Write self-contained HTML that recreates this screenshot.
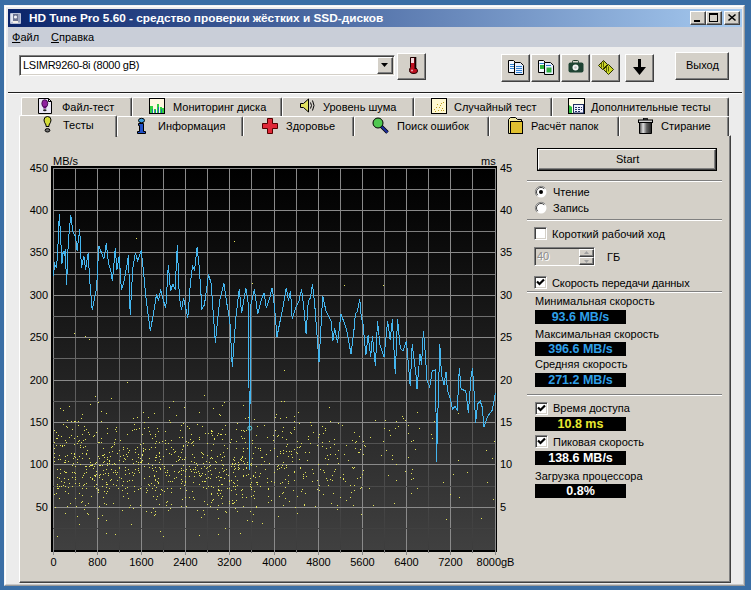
<!DOCTYPE html>
<html><head><meta charset="utf-8">
<style>
*{margin:0;padding:0;box-sizing:border-box}
html,body{width:751px;height:590px;overflow:hidden;background:#3A6EA5;font-family:"Liberation Sans",sans-serif;font-size:11px;color:#000}
.a{position:absolute}
svg.a{overflow:visible}
.t{position:absolute;white-space:nowrap;line-height:13px}
.btn{position:absolute;background:#D4D0C8;border:1px solid;border-color:#fff #404040 #404040 #fff;box-shadow:inset -1px -1px #808080}
.tb{position:absolute;background:#D4D0C8;border-top:1px solid #fff;border-left:1px solid #fff;border-right:1px solid #404040;box-shadow:inset -1px 0 #808080;border-radius:2px 2px 0 0}
.sep{position:absolute;height:2px;border-top:1px solid #808080;border-bottom:1px solid #fff}
.vbox{position:absolute;background:#000;font-weight:bold;font-size:12.5px;text-align:center;line-height:14px}
.cb{position:absolute;width:13px;height:13px;background:#fff;border:1px solid;border-color:#808080 #fff #fff #808080;box-shadow:inset 1px 1px #404040,inset -1px -1px #D4D0C8}
</style></head><body>
<!-- window -->
<div class="a" style="left:4px;top:5px;width:741px;height:581px;background:#ECECEC;border:1px solid;border-color:#F4F4F4 #9A9A9A #9A9A9A #F4F4F4"></div>
<div class="a" style="left:5px;top:6px;width:739px;height:579px;border:1px solid;border-color:#fff #C8C8C8 #C8C8C8 #fff"></div>
<!-- title bar -->
<div class="a" style="left:8px;top:9px;width:734px;height:18px;background:linear-gradient(90deg,#0A246A,#A6CAF0)"></div>
<svg class="a" style="left:10px;top:13px" width="11" height="11"><rect x="0" y="0" width="11" height="11" rx="1" fill="#B8C0D8"/><rect x="1" y="1" width="2" height="8" fill="#E0E4F0"/><rect x="3" y="1" width="5" height="7" fill="#6A7290"/><circle cx="5.5" cy="4" r="1.6" fill="#F0F0F4"/><rect x="3" y="8" width="5" height="2" fill="#F4F0E8"/><rect x="8" y="1" width="2" height="8" fill="#9AA2BC"/></svg>
<div class="t" id="title" style="left:29px;top:11px;color:#fff;font-weight:bold;font-size:11.8px;line-height:14px">HD Tune Pro 5.60 - средство проверки жёстких и SSD-дисков</div>
<!-- window buttons -->
<div class="btn" style="left:690px;top:11px;width:16px;height:14px"></div>
<div class="a" style="left:694px;top:20px;width:6px;height:2px;background:#000"></div>
<div class="btn" style="left:706px;top:11px;width:16px;height:14px"></div>
<div class="a" style="left:709px;top:13px;width:9px;height:9px;border:1px solid #000;border-top-width:2px"></div>
<div class="btn" style="left:724px;top:11px;width:16px;height:14px"></div>
<svg class="a" style="left:728px;top:14px" width="8" height="7"><path d="M0.5 0.5L7.5 6.5M7.5 0.5L0.5 6.5" stroke="#000" stroke-width="1.6"/></svg>
<!-- menu bar -->
<div class="a" style="left:8px;top:27px;width:734px;height:20px;background:#C9CED8"></div>
<div class="t" style="left:12px;top:31px"><u>Ф</u>айл</div>
<div class="t" style="left:51px;top:31px"><u>С</u>правка</div>
<!-- toolbar -->
<div class="a" style="left:8px;top:47px;width:734px;height:45px;background:#EEEEEE"></div>
<div class="a" style="left:8px;top:92px;width:734px;height:1px;background:#202020"></div>
<div class="a" style="left:8px;top:93px;width:734px;height:1px;background:#fff"></div>
<!-- combo -->
<div class="a" style="left:19px;top:55px;width:376px;height:21px;background:#fff;border:1px solid;border-color:#808080 #fff #fff #808080;box-shadow:inset 1px 1px #404040,inset -1px -1px #D4D0C8"></div>
<div class="t" style="left:23px;top:59px;letter-spacing:-0.25px">LSIMR9260-8i (8000 gB)</div>
<div class="btn" style="left:377px;top:57px;width:16px;height:17px"></div>
<svg class="a" style="left:381px;top:63px" width="7" height="4"><path d="M0 0H7L3.5 4z" fill="#000"/></svg>
<!-- thermometer btn -->
<div class="btn" style="left:397px;top:53px;width:29px;height:27px"></div>
<svg class="a" style="left:408px;top:56px" width="11" height="19"><path d="M2.5 1.5H7.5V11.5Q9.5 13 9.5 15Q9.5 17.5 6 17.5Q1.5 17.5 1.5 14.5Q1.5 12.5 2.5 11.5Z" fill="#C01020" stroke="#200000"/><rect x="3" y="2" width="3" height="5" fill="#F4D8DC"/><rect x="6.5" y="1" width="1.8" height="12" fill="#100000"/><circle cx="4" cy="14.5" r="1" fill="#F0B0B8"/></svg>
<!-- toolbar buttons -->
<div class="btn" style="left:501px;top:54px;width:29px;height:28px"></div>
<svg class="a" style="left:508px;top:60px" width="16" height="15"><path d="M0.5 0.5H5.5L7.5 2.5V12.5H0.5z" fill="#F4F8FF" stroke="#000"/><path d="M2 4.5H6M2 6.5H6M2 8.5H6" stroke="#3080D0"/><path d="M6.5 2.5H12.5L15.5 5.5V14.5H6.5z" fill="#E8F0FF" stroke="#000"/><path d="M8 6.5H14M8 8.5H14M8 10.5H14M8 12.5H14" stroke="#3080D0"/></svg>
<div class="btn" style="left:531px;top:54px;width:29px;height:28px"></div>
<svg class="a" style="left:538px;top:60px" width="16" height="15"><path d="M0.5 0.5H5.5L7.5 2.5V12.5H0.5z" fill="#F4F8FF" stroke="#000"/><rect x="2" y="5" width="4" height="4" fill="#30B040"/><path d="M1.5 3.5H6" stroke="#3080D0"/><path d="M6.5 2.5H12.5L15.5 5.5V14.5H6.5z" fill="#E8F0FF" stroke="#000"/><rect x="8.5" y="7.5" width="5" height="5" fill="#30B040"/><path d="M8 5.5H13" stroke="#3080D0"/></svg>
<div class="btn" style="left:561px;top:54px;width:29px;height:28px"></div>
<svg class="a" style="left:568px;top:60px" width="16" height="13"><rect x="4.5" y="0.5" width="6" height="3" rx="1" fill="none" stroke="#1C3A2A"/><rect x="0.5" y="2.5" width="15" height="10" rx="2" fill="#1E4232"/><circle cx="7.5" cy="7.5" r="3" fill="#F4F4F4"/><circle cx="7.5" cy="7.5" r="1.3" fill="#C0C0C0"/></svg>
<div class="btn" style="left:591px;top:54px;width:29px;height:28px"></div>
<svg class="a" style="left:597px;top:59px" width="18" height="17"><g fill="#CCD828" stroke="#2A3000" stroke-width="1"><path d="M1.5 6.5L6.5 1.5L10.5 5.5L5.5 10.5z" stroke-linejoin="round"/><path d="M6.5 10.5L11.5 5.5L16.5 10.5L11.5 15.5z" stroke-linejoin="round"/></g><path d="M4.5 3.5V8.5M6.5 2.5V8.5M9.5 7.5V13.5M11.5 7.5V12.5" stroke="#4A5000" stroke-width="0.9"/></svg>
<div class="btn" style="left:625px;top:54px;width:29px;height:28px"></div>
<svg class="a" style="left:633px;top:59px" width="13" height="16"><path d="M5 0H8V8H13L6.5 16L0 8H5z" fill="#000"/></svg>
<div class="btn" style="left:675px;top:52px;width:54px;height:28px"></div>
<div class="t" style="left:686px;top:59px">Выход</div>

<!-- panel -->
<div class="a" style="left:19px;top:135px;width:712px;height:448px;background:#D4D0C8;border:1px solid;border-color:#fff #404040 #404040 #fff;box-shadow:inset -1px -1px #808080"></div>

<!-- tabs row1 -->
<div class="tb" style="left:21px;top:97px;width:111px;height:19px"></div>
<div class="tb" style="left:132px;top:97px;width:150px;height:19px"></div>
<div class="tb" style="left:282px;top:97px;width:132px;height:19px"></div>
<div class="tb" style="left:414px;top:97px;width:138px;height:19px"></div>
<div class="tb" style="left:552px;top:97px;width:177px;height:19px"></div>
<div class="t" style="left:62px;top:101px">Файл-тест</div>
<div class="t" style="left:173px;top:101px">Мониторинг диска</div>
<div class="t" style="left:323px;top:101px">Уровень шума</div>
<div class="t" style="left:454px;top:101px">Случайный тест</div>
<div class="t" style="left:591px;top:101px">Дополнительные тесты</div>

<svg class="a" style="left:38px;top:98px" width="15" height="16"><path d="M0.5 0.5H10.5L13.5 3.5V15.5H0.5z" fill="#ECE8F8" stroke="#000"/><path d="M10.5 0.5V3.5H13.5" fill="none" stroke="#000"/><ellipse cx="6.8" cy="5.5" rx="3" ry="3.8" fill="#9020A0" stroke="#300038" stroke-width="0.8"/><rect x="5.3" y="8.5" width="3" height="2" fill="#600070"/><ellipse cx="6.8" cy="12.3" rx="1.8" ry="1" fill="#202020"/></svg>
<svg class="a" style="left:149px;top:98px" width="16" height="16"><rect x="0.5" y="0.5" width="15" height="15" fill="#FFF8E0" stroke="#000"/><path d="M1 8H4V15H1zM5 11H7V15H5zM8 6H10V15H8zM11 9H13V15H11zM13 10H15V15H13z" fill="#30D040"/><path d="M3 11H4V15H3zM6 12H7V15H6zM9 9H10V15H9zM12 11H13V15H12z" fill="#2070B0"/></svg>
<svg class="a" style="left:299px;top:98px" width="18" height="15"><path d="M1.5 5.5H4.5L9.5 1V14L4.5 9.5H1.5z" fill="#E0E060" stroke="#000"/><path d="M11.5 4.5Q13.5 7.5 11.5 10.5M13.5 2.5Q16.5 7.5 13.5 12.5" fill="none" stroke="#000"/></svg>
<svg class="a" style="left:431px;top:98px" width="16" height="16"><rect x="0.5" y="0.5" width="15" height="15" fill="#FFF8D0" stroke="#000"/><path d="M3 11h1v1h-1zM5 9h1v1h-1zM7 12h1v1h-1zM9 7h1v1h-1zM11 10h1v1h-1zM12 4h1v1h-1zM6 6h1v1h-1zM10 12h1v1h-1zM4 13h1v1h-1zM8 9h1v1h-1zM12 12h1v1h-1zM10 5h1v1h-1z" fill="#C0A020"/></svg>
<svg class="a" style="left:568px;top:98px" width="17" height="16"><rect x="0.5" y="0.5" width="16" height="15" fill="#FFFCE8" stroke="#000"/><path d="M1 7L4 9V15H1z" fill="#30C040"/><rect x="5.5" y="6.5" width="10" height="8.5" fill="#F0F0FF" stroke="#203060"/><path d="M7 9h2v1h-2zM10 9h2v1h-2zM13 9h1v1h-1zM7 11h2v1h-2zM10 11h2v1h-2zM13 11h1v1h-1zM7 13h2v1h-2zM10 13h2v1h-2z" fill="#203060"/></svg>

<!-- tabs row2 -->
<div class="tb" style="left:117px;top:116px;width:126px;height:20px"></div>
<div class="tb" style="left:243px;top:116px;width:111px;height:20px"></div>
<div class="tb" style="left:354px;top:116px;width:135px;height:20px"></div>
<div class="tb" style="left:489px;top:116px;width:130px;height:20px"></div>
<div class="tb" style="left:619px;top:116px;width:110px;height:20px"></div>
<div class="tb" style="left:19px;top:115px;width:98px;height:22px;border-radius:2px 2px 0 0"></div>
<div class="t" style="left:63px;top:119px">Тесты</div>
<div class="t" style="left:158px;top:120px">Информация</div>
<div class="t" style="left:286px;top:120px">Здоровье</div>
<div class="t" style="left:397px;top:120px">Поиск ошибок</div>
<div class="t" style="left:531px;top:120px">Расчёт папок</div>
<div class="t" style="left:661px;top:120px">Стирание</div>

<svg class="a" style="left:43px;top:116px" width="10" height="17"><path d="M4.5 0.5Q8 0.5 8 4Q8 6 6 9V10.5H3V9Q1 6 1 4Q1 0.5 4.5 0.5z" fill="#D4DC38" stroke="#000"/><ellipse cx="4.5" cy="14.3" rx="2.4" ry="1.7" fill="#707070" stroke="#000"/></svg>
<svg class="a" style="left:137px;top:118px" width="10" height="16"><ellipse cx="4.5" cy="2.5" rx="3" ry="2.2" fill="#40A0E0" stroke="#000"/><path d="M1.5 5.5H6.5V13.5H8.5V15.5H0.5V13.5H2.5V7.5H1.5z" fill="#2050C8" stroke="#000"/></svg>
<svg class="a" style="left:262px;top:118px" width="17" height="16"><path d="M5.5 0.5H10.5V5.5H15.5V10.5H10.5V15.5H5.5V10.5H0.5V5.5H5.5z" fill="#E02838" stroke="#500"/></svg>
<svg class="a" style="left:372px;top:117px" width="18" height="17"><path d="M9 9L15.5 15.5" stroke="#000" stroke-width="3.5"/><path d="M9 9L15.5 15.5" stroke="#2030A0" stroke-width="2"/><circle cx="6" cy="6" r="5" fill="#50C850" stroke="#000"/></svg>
<svg class="a" style="left:508px;top:117px" width="16" height="17"><path d="M0.5 2.5L2.5 0.5H7.5L9.5 2.5H13.5V16.5H0.5z" fill="#F0E8A0" stroke="#000"/><rect x="2.5" y="4.5" width="12" height="12" fill="#E0C030" stroke="#000"/></svg>
<svg class="a" style="left:638px;top:118px" width="15" height="16"><defs><linearGradient id="tr" x1="0" x2="1"><stop offset="0" stop-color="#404040"/><stop offset="0.3" stop-color="#E0E0E0"/><stop offset="0.6" stop-color="#606060"/><stop offset="1" stop-color="#202020"/></linearGradient></defs><rect x="5.5" y="0.5" width="4" height="1.5" fill="#808080" stroke="#000" stroke-width="0.8"/><rect x="0.5" y="2" width="14" height="2.5" fill="#D0D0D0" stroke="#000"/><path d="M1.5 4.5H13.5V15.5H1.5z" fill="url(#tr)" stroke="#000"/></svg>


<svg class="a" style="left:0;top:0" width="751" height="590">
<defs><linearGradient id="bg" x1="0" y1="0" x2="0" y2="1"><stop offset="0" stop-color="#000"/><stop offset="0.12" stop-color="#060606"/><stop offset="1" stop-color="#404040"/></linearGradient>
<linearGradient id="mn" gradientUnits="userSpaceOnUse" x1="0" y1="168" x2="0" y2="550"><stop offset="0" stop-color="#8a8a8a"/><stop offset="0.45" stop-color="#6a6a6a"/><stop offset="1" stop-color="#3c3c3c"/></linearGradient></defs>
<rect x="51" y="166" width="446" height="386" fill="#000"/>
<rect x="53" y="168" width="443" height="382" fill="url(#bg)"/>
<rect x="53" y="168" width="1" height="387" fill="#8a8a8a"/>
<rect x="75" y="168" width="1" height="382" fill="url(#mn)"/>
<rect x="75" y="550" width="1" height="3" fill="#7a7a7a"/>
<rect x="97" y="168" width="1" height="387" fill="#8a8a8a"/>
<rect x="119" y="168" width="1" height="382" fill="url(#mn)"/>
<rect x="119" y="550" width="1" height="3" fill="#7a7a7a"/>
<rect x="141" y="168" width="1" height="387" fill="#8a8a8a"/>
<rect x="163" y="168" width="1" height="382" fill="url(#mn)"/>
<rect x="163" y="550" width="1" height="3" fill="#7a7a7a"/>
<rect x="185" y="168" width="1" height="387" fill="#8a8a8a"/>
<rect x="207" y="168" width="1" height="382" fill="url(#mn)"/>
<rect x="207" y="550" width="1" height="3" fill="#7a7a7a"/>
<rect x="229" y="168" width="1" height="387" fill="#8a8a8a"/>
<rect x="251" y="168" width="1" height="382" fill="url(#mn)"/>
<rect x="251" y="550" width="1" height="3" fill="#7a7a7a"/>
<rect x="274" y="168" width="1" height="387" fill="#8a8a8a"/>
<rect x="296" y="168" width="1" height="382" fill="url(#mn)"/>
<rect x="296" y="550" width="1" height="3" fill="#7a7a7a"/>
<rect x="318" y="168" width="1" height="387" fill="#8a8a8a"/>
<rect x="340" y="168" width="1" height="382" fill="url(#mn)"/>
<rect x="340" y="550" width="1" height="3" fill="#7a7a7a"/>
<rect x="362" y="168" width="1" height="387" fill="#8a8a8a"/>
<rect x="384" y="168" width="1" height="382" fill="url(#mn)"/>
<rect x="384" y="550" width="1" height="3" fill="#7a7a7a"/>
<rect x="406" y="168" width="1" height="387" fill="#8a8a8a"/>
<rect x="428" y="168" width="1" height="382" fill="url(#mn)"/>
<rect x="428" y="550" width="1" height="3" fill="#7a7a7a"/>
<rect x="450" y="168" width="1" height="387" fill="#8a8a8a"/>
<rect x="472" y="168" width="1" height="382" fill="url(#mn)"/>
<rect x="472" y="550" width="1" height="3" fill="#7a7a7a"/>
<rect x="495" y="168" width="1" height="387" fill="#8a8a8a"/>
<rect x="53" y="168" width="442" height="1" fill="#8a8a8a"/>
<rect x="53" y="189" width="442" height="1" fill="url(#mn)"/>
<rect x="53" y="210" width="442" height="1" fill="#8a8a8a"/>
<rect x="53" y="231" width="442" height="1" fill="url(#mn)"/>
<rect x="53" y="252" width="442" height="1" fill="#8a8a8a"/>
<rect x="53" y="274" width="442" height="1" fill="url(#mn)"/>
<rect x="53" y="295" width="442" height="1" fill="#8a8a8a"/>
<rect x="53" y="316" width="442" height="1" fill="url(#mn)"/>
<rect x="53" y="337" width="442" height="1" fill="#8a8a8a"/>
<rect x="53" y="358" width="442" height="1" fill="url(#mn)"/>
<rect x="53" y="380" width="442" height="1" fill="#8a8a8a"/>
<rect x="53" y="401" width="442" height="1" fill="url(#mn)"/>
<rect x="53" y="422" width="442" height="1" fill="#8a8a8a"/>
<rect x="53" y="443" width="442" height="1" fill="url(#mn)"/>
<rect x="53" y="464" width="442" height="1" fill="#8a8a8a"/>
<rect x="53" y="486" width="442" height="1" fill="url(#mn)"/>
<rect x="53" y="507" width="442" height="1" fill="#8a8a8a"/>
<rect x="53" y="528" width="442" height="1" fill="url(#mn)"/>
<path d="M184 459h1v1h-1zM68 479h1v1h-1zM65 440h1v1h-1zM155 460h1v1h-1zM68 493h1v1h-1zM72 472h1v1h-1zM78 421h1v1h-1zM98 489h1v1h-1zM169 420h1v1h-1zM133 418h1v1h-1zM226 474h1v1h-1zM112 464h1v1h-1zM116 474h1v1h-1zM218 476h1v1h-1zM182 481h1v1h-1zM128 498h1v1h-1zM65 456h1v1h-1zM95 463h1v1h-1zM117 453h1v1h-1zM171 440h1v1h-1zM213 444h1v1h-1zM194 472h1v1h-1zM159 467h1v1h-1zM229 501h1v1h-1zM251 463h1v1h-1zM77 443h1v1h-1zM84 426h1v1h-1zM152 488h1v1h-1zM207 504h1v1h-1zM169 475h1v1h-1zM193 482h1v1h-1zM173 449h1v1h-1zM222 439h1v1h-1zM243 451h1v1h-1zM66 426h1v1h-1zM194 472h1v1h-1zM219 414h1v1h-1zM111 398h1v1h-1zM58 435h1v1h-1zM146 492h1v1h-1zM65 472h1v1h-1zM208 477h1v1h-1zM132 480h1v1h-1zM229 480h1v1h-1zM164 491h1v1h-1zM231 480h1v1h-1zM109 488h1v1h-1zM137 417h1v1h-1zM246 430h1v1h-1zM84 509h1v1h-1zM100 474h1v1h-1zM151 483h1v1h-1zM54 448h1v1h-1zM138 454h1v1h-1zM245 442h1v1h-1zM192 491h1v1h-1zM189 428h1v1h-1zM64 462h1v1h-1zM229 503h1v1h-1zM214 438h1v1h-1zM74 444h1v1h-1zM181 483h1v1h-1zM95 475h1v1h-1zM86 469h1v1h-1zM54 461h1v1h-1zM84 473h1v1h-1zM59 486h1v1h-1zM229 481h1v1h-1zM104 454h1v1h-1zM123 455h1v1h-1zM224 456h1v1h-1zM253 476h1v1h-1zM71 435h1v1h-1zM74 472h1v1h-1zM220 454h1v1h-1zM86 483h1v1h-1zM160 531h1v1h-1zM83 475h1v1h-1zM160 459h1v1h-1zM250 464h1v1h-1zM106 493h1v1h-1zM127 434h1v1h-1zM161 489h1v1h-1zM210 506h1v1h-1zM217 456h1v1h-1zM251 482h1v1h-1zM218 495h1v1h-1zM202 426h1v1h-1zM125 470h1v1h-1zM59 498h1v1h-1zM106 487h1v1h-1zM193 469h1v1h-1zM242 494h1v1h-1zM252 458h1v1h-1zM98 490h1v1h-1zM99 458h1v1h-1zM179 471h1v1h-1zM234 483h1v1h-1zM185 482h1v1h-1zM214 439h1v1h-1zM236 500h1v1h-1zM211 486h1v1h-1zM89 466h1v1h-1zM212 435h1v1h-1zM249 441h1v1h-1zM133 508h1v1h-1zM199 412h1v1h-1zM88 503h1v1h-1zM235 476h1v1h-1zM216 477h1v1h-1zM251 496h1v1h-1zM186 506h1v1h-1zM80 445h1v1h-1zM56 493h1v1h-1zM159 504h1v1h-1zM241 458h1v1h-1zM220 415h1v1h-1zM96 488h1v1h-1zM102 465h1v1h-1zM171 488h1v1h-1zM80 464h1v1h-1zM236 494h1v1h-1zM171 447h1v1h-1zM235 489h1v1h-1zM154 413h1v1h-1zM160 494h1v1h-1zM142 460h1v1h-1zM90 465h1v1h-1zM88 514h1v1h-1zM149 467h1v1h-1zM119 460h1v1h-1zM158 431h1v1h-1zM75 421h1v1h-1zM166 449h1v1h-1zM209 466h1v1h-1zM156 487h1v1h-1zM237 423h1v1h-1zM143 448h1v1h-1zM156 441h1v1h-1zM193 445h1v1h-1zM150 434h1v1h-1zM243 475h1v1h-1zM243 448h1v1h-1zM106 413h1v1h-1zM222 405h1v1h-1zM81 442h1v1h-1zM68 487h1v1h-1zM102 486h1v1h-1zM211 502h1v1h-1zM234 483h1v1h-1zM186 490h1v1h-1zM82 501h1v1h-1zM98 518h1v1h-1zM245 418h1v1h-1zM252 440h1v1h-1zM221 484h1v1h-1zM157 481h1v1h-1zM122 490h1v1h-1zM199 473h1v1h-1zM57 488h1v1h-1zM57 438h1v1h-1zM120 456h1v1h-1zM66 442h1v1h-1zM252 443h1v1h-1zM75 483h1v1h-1zM210 465h1v1h-1zM108 473h1v1h-1zM237 485h1v1h-1zM218 486h1v1h-1zM238 465h1v1h-1zM168 481h1v1h-1zM65 462h1v1h-1zM192 454h1v1h-1zM242 456h1v1h-1zM181 470h1v1h-1zM226 469h1v1h-1zM67 455h1v1h-1zM122 485h1v1h-1zM165 443h1v1h-1zM79 485h1v1h-1zM159 456h1v1h-1zM86 466h1v1h-1zM64 478h1v1h-1zM115 472h1v1h-1zM206 488h1v1h-1zM89 458h1v1h-1zM123 496h1v1h-1zM57 486h1v1h-1zM201 468h1v1h-1zM149 449h1v1h-1zM241 460h1v1h-1zM140 505h1v1h-1zM153 496h1v1h-1zM155 479h1v1h-1zM192 442h1v1h-1zM221 490h1v1h-1zM196 463h1v1h-1zM123 447h1v1h-1zM64 445h1v1h-1zM202 473h1v1h-1zM105 473h1v1h-1zM223 471h1v1h-1zM228 475h1v1h-1zM102 455h1v1h-1zM112 446h1v1h-1zM143 450h1v1h-1zM106 469h1v1h-1zM163 536h1v1h-1zM103 448h1v1h-1zM125 488h1v1h-1zM54 461h1v1h-1zM155 443h1v1h-1zM94 486h1v1h-1zM107 463h1v1h-1zM72 465h1v1h-1zM58 459h1v1h-1zM115 470h1v1h-1zM160 469h1v1h-1zM204 501h1v1h-1zM230 442h1v1h-1zM132 430h1v1h-1zM84 430h1v1h-1zM199 535h1v1h-1zM221 460h1v1h-1zM233 459h1v1h-1zM217 435h1v1h-1zM82 434h1v1h-1zM221 434h1v1h-1zM215 461h1v1h-1zM233 482h1v1h-1zM191 434h1v1h-1zM60 459h1v1h-1zM80 447h1v1h-1zM222 457h1v1h-1zM166 475h1v1h-1zM190 439h1v1h-1zM152 438h1v1h-1zM204 514h1v1h-1zM155 467h1v1h-1zM67 427h1v1h-1zM202 457h1v1h-1zM107 465h1v1h-1zM200 476h1v1h-1zM250 478h1v1h-1zM153 508h1v1h-1zM191 443h1v1h-1zM208 486h1v1h-1zM69 437h1v1h-1zM83 440h1v1h-1zM115 464h1v1h-1zM168 510h1v1h-1zM108 475h1v1h-1zM189 466h1v1h-1zM112 451h1v1h-1zM157 428h1v1h-1zM77 436h1v1h-1zM233 472h1v1h-1zM242 489h1v1h-1zM57 536h1v1h-1zM248 417h1v1h-1zM144 478h1v1h-1zM244 463h1v1h-1zM96 484h1v1h-1zM159 452h1v1h-1zM245 458h1v1h-1zM156 499h1v1h-1zM232 503h1v1h-1zM234 460h1v1h-1zM151 447h1v1h-1zM152 468h1v1h-1zM144 466h1v1h-1zM123 461h1v1h-1zM117 480h1v1h-1zM204 466h1v1h-1zM222 464h1v1h-1zM197 510h1v1h-1zM235 508h1v1h-1zM132 459h1v1h-1zM254 491h1v1h-1zM140 444h1v1h-1zM109 452h1v1h-1zM221 477h1v1h-1zM111 469h1v1h-1zM107 484h1v1h-1zM156 457h1v1h-1zM246 475h1v1h-1zM231 490h1v1h-1zM237 480h1v1h-1zM243 430h1v1h-1zM63 424h1v1h-1zM201 452h1v1h-1zM183 423h1v1h-1zM111 479h1v1h-1zM79 524h1v1h-1zM148 484h1v1h-1zM202 453h1v1h-1zM250 484h1v1h-1zM114 463h1v1h-1zM166 505h1v1h-1zM86 453h1v1h-1zM95 476h1v1h-1zM98 492h1v1h-1zM236 448h1v1h-1zM82 495h1v1h-1zM92 465h1v1h-1zM72 486h1v1h-1zM102 479h1v1h-1zM232 464h1v1h-1zM204 501h1v1h-1zM159 442h1v1h-1zM129 480h1v1h-1zM109 460h1v1h-1zM248 474h1v1h-1zM180 488h1v1h-1zM227 488h1v1h-1zM103 470h1v1h-1zM134 486h1v1h-1zM224 402h1v1h-1zM229 488h1v1h-1zM196 472h1v1h-1zM234 466h1v1h-1zM54 430h1v1h-1zM132 472h1v1h-1zM225 511h1v1h-1zM249 443h1v1h-1zM85 466h1v1h-1zM158 478h1v1h-1zM199 439h1v1h-1zM184 407h1v1h-1zM164 468h1v1h-1zM61 436h1v1h-1zM238 469h1v1h-1zM183 446h1v1h-1zM104 461h1v1h-1zM181 479h1v1h-1zM68 461h1v1h-1zM159 453h1v1h-1zM98 442h1v1h-1zM174 452h1v1h-1zM146 488h1v1h-1zM246 467h1v1h-1zM149 431h1v1h-1zM101 421h1v1h-1zM195 467h1v1h-1zM115 534h1v1h-1zM189 497h1v1h-1zM138 470h1v1h-1zM239 464h1v1h-1zM99 506h1v1h-1zM138 489h1v1h-1zM191 471h1v1h-1zM202 481h1v1h-1zM155 511h1v1h-1zM116 485h1v1h-1zM218 534h1v1h-1zM206 468h1v1h-1zM113 484h1v1h-1zM91 496h1v1h-1zM98 456h1v1h-1zM244 431h1v1h-1zM83 485h1v1h-1zM249 451h1v1h-1zM82 477h1v1h-1zM133 475h1v1h-1zM234 469h1v1h-1zM254 498h1v1h-1zM241 436h1v1h-1zM242 457h1v1h-1zM204 481h1v1h-1zM130 505h1v1h-1zM129 473h1v1h-1zM54 457h1v1h-1zM110 480h1v1h-1zM78 425h1v1h-1zM247 520h1v1h-1zM219 472h1v1h-1zM219 490h1v1h-1zM149 458h1v1h-1zM128 469h1v1h-1zM127 481h1v1h-1zM234 457h1v1h-1zM217 493h1v1h-1zM208 471h1v1h-1zM66 472h1v1h-1zM238 467h1v1h-1zM234 464h1v1h-1zM122 510h1v1h-1zM178 456h1v1h-1zM106 533h1v1h-1zM109 461h1v1h-1zM54 442h1v1h-1zM181 468h1v1h-1zM243 405h1v1h-1zM149 485h1v1h-1zM246 468h1v1h-1zM104 491h1v1h-1zM140 458h1v1h-1zM90 404h1v1h-1zM215 468h1v1h-1zM209 462h1v1h-1zM176 415h1v1h-1zM126 454h1v1h-1zM211 486h1v1h-1zM205 481h1v1h-1zM103 474h1v1h-1zM165 472h1v1h-1zM119 468h1v1h-1zM252 521h1v1h-1zM107 459h1v1h-1zM154 476h1v1h-1zM196 472h1v1h-1zM137 447h1v1h-1zM178 472h1v1h-1zM224 445h1v1h-1zM187 426h1v1h-1zM113 503h1v1h-1zM167 501h1v1h-1zM94 435h1v1h-1zM103 497h1v1h-1zM231 466h1v1h-1zM170 481h1v1h-1zM253 453h1v1h-1zM155 490h1v1h-1zM185 471h1v1h-1zM253 514h1v1h-1zM218 490h1v1h-1zM222 484h1v1h-1zM113 472h1v1h-1zM77 462h1v1h-1zM171 492h1v1h-1zM240 533h1v1h-1zM144 428h1v1h-1zM106 504h1v1h-1zM75 477h1v1h-1zM173 401h1v1h-1zM128 452h1v1h-1zM82 453h1v1h-1zM174 471h1v1h-1zM184 485h1v1h-1zM119 467h1v1h-1zM190 469h1v1h-1zM94 475h1v1h-1zM213 487h1v1h-1zM74 456h1v1h-1zM133 463h1v1h-1zM72 429h1v1h-1zM86 454h1v1h-1zM110 456h1v1h-1zM115 439h1v1h-1zM167 488h1v1h-1zM125 459h1v1h-1zM254 419h1v1h-1zM127 493h1v1h-1zM94 480h1v1h-1zM55 507h1v1h-1zM218 489h1v1h-1zM135 449h1v1h-1zM86 488h1v1h-1zM56 445h1v1h-1zM236 429h1v1h-1zM71 453h1v1h-1zM155 447h1v1h-1zM83 447h1v1h-1zM240 459h1v1h-1zM75 498h1v1h-1zM248 417h1v1h-1zM93 468h1v1h-1zM250 511h1v1h-1zM151 512h1v1h-1zM131 524h1v1h-1zM235 486h1v1h-1zM86 429h1v1h-1zM211 431h1v1h-1zM224 470h1v1h-1zM220 493h1v1h-1zM134 473h1v1h-1zM158 483h1v1h-1zM103 455h1v1h-1zM199 475h1v1h-1zM167 472h1v1h-1zM206 461h1v1h-1zM77 516h1v1h-1zM174 478h1v1h-1zM115 429h1v1h-1zM138 454h1v1h-1zM186 441h1v1h-1zM143 451h1v1h-1zM178 460h1v1h-1zM152 468h1v1h-1zM210 470h1v1h-1zM146 511h1v1h-1zM75 479h1v1h-1zM79 493h1v1h-1zM142 455h1v1h-1zM156 471h1v1h-1zM70 503h1v1h-1zM201 475h1v1h-1zM64 471h1v1h-1zM155 434h1v1h-1zM81 418h1v1h-1zM226 512h1v1h-1zM217 509h1v1h-1zM92 464h1v1h-1zM246 497h1v1h-1zM238 462h1v1h-1zM241 490h1v1h-1zM67 506h1v1h-1zM85 439h1v1h-1zM234 502h1v1h-1zM82 458h1v1h-1zM154 515h1v1h-1zM106 482h1v1h-1zM155 457h1v1h-1zM90 462h1v1h-1zM86 472h1v1h-1zM233 503h1v1h-1zM87 450h1v1h-1zM160 468h1v1h-1zM181 452h1v1h-1zM165 431h1v1h-1zM170 508h1v1h-1zM253 475h1v1h-1zM180 457h1v1h-1zM107 428h1v1h-1zM253 495h1v1h-1zM207 443h1v1h-1zM142 454h1v1h-1zM63 485h1v1h-1zM218 505h1v1h-1zM251 465h1v1h-1zM171 504h1v1h-1zM54 453h1v1h-1zM60 445h1v1h-1zM140 488h1v1h-1zM157 496h1v1h-1zM99 477h1v1h-1zM185 457h1v1h-1zM125 467h1v1h-1zM75 466h1v1h-1zM171 454h1v1h-1zM172 481h1v1h-1zM149 476h1v1h-1zM81 502h1v1h-1zM84 484h1v1h-1zM73 458h1v1h-1zM211 430h1v1h-1zM134 424h1v1h-1zM183 465h1v1h-1zM167 470h1v1h-1zM143 443h1v1h-1zM242 497h1v1h-1zM235 463h1v1h-1zM62 445h1v1h-1zM101 438h1v1h-1zM65 460h1v1h-1zM164 466h1v1h-1zM243 461h1v1h-1zM176 477h1v1h-1zM155 480h1v1h-1zM89 434h1v1h-1zM116 427h1v1h-1zM232 463h1v1h-1zM211 474h1v1h-1zM223 465h1v1h-1zM203 463h1v1h-1zM144 422h1v1h-1zM99 475h1v1h-1zM61 481h1v1h-1zM121 478h1v1h-1zM223 465h1v1h-1zM197 424h1v1h-1zM141 462h1v1h-1zM212 500h1v1h-1zM183 445h1v1h-1zM247 462h1v1h-1zM57 477h1v1h-1zM106 520h1v1h-1zM243 469h1v1h-1zM203 510h1v1h-1zM120 440h1v1h-1zM102 515h1v1h-1zM193 497h1v1h-1zM187 445h1v1h-1zM222 496h1v1h-1zM194 462h1v1h-1zM199 484h1v1h-1zM168 443h1v1h-1zM179 459h1v1h-1zM69 483h1v1h-1zM59 478h1v1h-1zM75 457h1v1h-1zM82 488h1v1h-1zM59 455h1v1h-1zM181 506h1v1h-1zM194 476h1v1h-1zM172 465h1v1h-1zM127 456h1v1h-1zM233 486h1v1h-1zM67 420h1v1h-1zM243 506h1v1h-1zM75 421h1v1h-1zM60 469h1v1h-1zM224 478h1v1h-1zM219 480h1v1h-1zM180 430h1v1h-1zM73 463h1v1h-1zM206 478h1v1h-1zM139 472h1v1h-1zM58 488h1v1h-1zM197 465h1v1h-1zM127 487h1v1h-1zM155 436h1v1h-1zM225 528h1v1h-1zM136 461h1v1h-1zM141 461h1v1h-1zM195 469h1v1h-1zM162 441h1v1h-1zM72 477h1v1h-1zM218 518h1v1h-1zM94 466h1v1h-1zM207 467h1v1h-1zM152 468h1v1h-1zM152 465h1v1h-1zM153 470h1v1h-1zM123 449h1v1h-1zM243 476h1v1h-1zM111 447h1v1h-1zM154 475h1v1h-1zM76 506h1v1h-1zM212 458h1v1h-1zM194 457h1v1h-1zM125 474h1v1h-1zM134 429h1v1h-1zM71 421h1v1h-1zM232 500h1v1h-1zM106 484h1v1h-1zM235 468h1v1h-1zM231 439h1v1h-1zM100 465h1v1h-1zM205 433h1v1h-1zM205 474h1v1h-1zM119 450h1v1h-1zM85 446h1v1h-1zM203 487h1v1h-1zM88 432h1v1h-1zM170 422h1v1h-1zM79 483h1v1h-1zM101 411h1v1h-1zM92 479h1v1h-1zM223 452h1v1h-1zM85 505h1v1h-1zM119 477h1v1h-1zM158 482h1v1h-1zM92 478h1v1h-1zM250 486h1v1h-1zM247 464h1v1h-1zM74 453h1v1h-1zM213 408h1v1h-1zM201 517h1v1h-1zM182 449h1v1h-1zM75 473h1v1h-1zM60 473h1v1h-1zM134 491h1v1h-1zM154 476h1v1h-1zM181 425h1v1h-1zM175 451h1v1h-1zM135 469h1v1h-1zM140 462h1v1h-1zM169 407h1v1h-1zM99 465h1v1h-1zM199 437h1v1h-1zM194 499h1v1h-1zM225 434h1v1h-1zM145 449h1v1h-1zM116 431h1v1h-1zM138 457h1v1h-1zM211 457h1v1h-1zM104 457h1v1h-1zM139 428h1v1h-1zM136 429h1v1h-1zM189 476h1v1h-1zM185 481h1v1h-1zM210 458h1v1h-1zM249 442h1v1h-1zM61 486h1v1h-1zM211 450h1v1h-1zM243 461h1v1h-1zM169 453h1v1h-1zM162 464h1v1h-1zM182 459h1v1h-1zM220 434h1v1h-1zM244 438h1v1h-1zM96 462h1v1h-1zM207 455h1v1h-1zM78 441h1v1h-1zM65 491h1v1h-1zM109 463h1v1h-1zM138 462h1v1h-1zM138 468h1v1h-1zM107 457h1v1h-1zM99 442h1v1h-1zM159 462h1v1h-1zM98 402h1v1h-1zM96 474h1v1h-1zM79 440h1v1h-1zM181 474h1v1h-1zM148 417h1v1h-1zM247 448h1v1h-1zM124 458h1v1h-1zM218 433h1v1h-1zM148 427h1v1h-1zM79 456h1v1h-1zM221 498h1v1h-1zM107 433h1v1h-1zM129 507h1v1h-1zM91 465h1v1h-1zM54 494h1v1h-1zM103 462h1v1h-1zM114 444h1v1h-1zM182 437h1v1h-1zM186 469h1v1h-1zM225 425h1v1h-1zM65 513h1v1h-1zM211 493h1v1h-1zM82 414h1v1h-1zM57 484h1v1h-1zM56 432h1v1h-1zM104 503h1v1h-1zM74 454h1v1h-1zM210 478h1v1h-1zM123 481h1v1h-1zM213 499h1v1h-1zM87 513h1v1h-1zM211 494h1v1h-1zM188 442h1v1h-1zM222 503h1v1h-1zM93 436h1v1h-1zM203 454h1v1h-1zM142 434h1v1h-1zM107 491h1v1h-1zM101 442h1v1h-1zM65 486h1v1h-1zM147 490h1v1h-1zM154 485h1v1h-1zM162 490h1v1h-1zM222 468h1v1h-1zM148 463h1v1h-1zM222 429h1v1h-1zM129 450h1v1h-1zM69 406h1v1h-1zM182 499h1v1h-1zM176 461h1v1h-1zM191 461h1v1h-1zM251 487h1v1h-1zM156 455h1v1h-1zM60 408h1v1h-1zM198 471h1v1h-1zM227 448h1v1h-1zM127 448h1v1h-1zM208 433h1v1h-1zM96 471h1v1h-1zM165 440h1v1h-1zM220 477h1v1h-1zM135 452h1v1h-1zM155 514h1v1h-1zM249 461h1v1h-1zM185 497h1v1h-1zM117 472h1v1h-1zM114 442h1v1h-1zM211 433h1v1h-1zM62 446h1v1h-1zM163 456h1v1h-1zM63 410h1v1h-1zM92 465h1v1h-1zM239 468h1v1h-1zM212 435h1v1h-1zM236 441h1v1h-1zM179 437h1v1h-1zM193 441h1v1h-1zM96 432h1v1h-1zM188 442h1v1h-1zM74 421h1v1h-1zM90 477h1v1h-1zM237 511h1v1h-1zM185 476h1v1h-1zM212 431h1v1h-1zM166 502h1v1h-1zM138 464h1v1h-1zM118 488h1v1h-1zM241 430h1v1h-1zM64 482h1v1h-1zM77 459h1v1h-1zM216 462h1v1h-1zM143 412h1v1h-1zM56 438h1v1h-1zM242 438h1v1h-1zM251 489h1v1h-1zM74 438h1v1h-1zM183 470h1v1h-1zM57 469h1v1h-1zM255 477h1v1h-1zM288 456h1v1h-1zM258 448h1v1h-1zM255 472h1v1h-1zM280 451h1v1h-1zM261 464h1v1h-1zM256 507h1v1h-1zM284 468h1v1h-1zM280 418h1v1h-1zM279 496h1v1h-1zM271 481h1v1h-1zM288 481h1v1h-1zM280 453h1v1h-1zM277 466h1v1h-1zM283 462h1v1h-1zM280 483h1v1h-1zM260 473h1v1h-1zM257 482h1v1h-1zM267 437h1v1h-1zM278 435h1v1h-1zM260 448h1v1h-1zM277 469h1v1h-1zM277 436h1v1h-1zM282 437h1v1h-1zM288 475h1v1h-1zM265 469h1v1h-1zM257 426h1v1h-1zM283 505h1v1h-1zM266 454h1v1h-1zM284 401h1v1h-1zM276 414h1v1h-1zM286 451h1v1h-1zM268 489h1v1h-1zM286 446h1v1h-1zM283 427h1v1h-1zM264 461h1v1h-1zM269 463h1v1h-1zM286 417h1v1h-1zM256 435h1v1h-1zM285 487h1v1h-1zM275 417h1v1h-1zM283 453h1v1h-1zM278 516h1v1h-1zM257 484h1v1h-1zM274 448h1v1h-1zM281 467h1v1h-1zM287 444h1v1h-1zM278 465h1v1h-1zM271 500h1v1h-1zM281 467h1v1h-1zM282 482h1v1h-1zM283 450h1v1h-1zM282 465h1v1h-1zM286 465h1v1h-1zM285 498h1v1h-1zM275 430h1v1h-1zM261 457h1v1h-1zM279 468h1v1h-1zM267 478h1v1h-1zM273 435h1v1h-1zM260 450h1v1h-1zM268 488h1v1h-1zM282 493h1v1h-1zM260 486h1v1h-1zM273 440h1v1h-1zM255 447h1v1h-1zM285 479h1v1h-1zM264 425h1v1h-1zM282 465h1v1h-1zM281 401h1v1h-1zM283 492h1v1h-1zM256 482h1v1h-1zM262 457h1v1h-1zM256 466h1v1h-1zM274 472h1v1h-1zM288 483h1v1h-1zM286 439h1v1h-1zM268 496h1v1h-1zM259 476h1v1h-1zM274 482h1v1h-1zM277 456h1v1h-1zM268 502h1v1h-1zM270 450h1v1h-1zM289 501h1v1h-1zM262 523h1v1h-1zM267 482h1v1h-1zM286 467h1v1h-1zM256 506h1v1h-1zM282 431h1v1h-1zM289 451h1v1h-1zM294 416h1v1h-1zM360 488h1v1h-1zM340 497h1v1h-1zM346 445h1v1h-1zM297 496h1v1h-1zM299 447h1v1h-1zM326 478h1v1h-1zM300 468h1v1h-1zM340 477h1v1h-1zM304 505h1v1h-1zM292 461h1v1h-1zM360 477h1v1h-1zM355 448h1v1h-1zM323 470h1v1h-1zM297 447h1v1h-1zM337 509h1v1h-1zM323 433h1v1h-1zM325 428h1v1h-1zM337 505h1v1h-1zM294 471h1v1h-1zM343 474h1v1h-1zM355 442h1v1h-1zM309 452h1v1h-1zM310 443h1v1h-1zM352 467h1v1h-1zM326 448h1v1h-1zM313 473h1v1h-1zM363 470h1v1h-1zM294 449h1v1h-1zM305 493h1v1h-1zM325 430h1v1h-1zM305 452h1v1h-1zM317 480h1v1h-1zM359 452h1v1h-1zM357 478h1v1h-1zM294 472h1v1h-1zM363 454h1v1h-1zM291 433h1v1h-1zM300 467h1v1h-1zM290 432h1v1h-1zM303 476h1v1h-1zM322 426h1v1h-1zM332 475h1v1h-1zM300 446h1v1h-1zM343 479h1v1h-1zM304 504h1v1h-1zM335 469h1v1h-1zM327 464h1v1h-1zM335 454h1v1h-1zM343 478h1v1h-1zM305 472h1v1h-1zM294 421h1v1h-1zM344 454h1v1h-1zM294 427h1v1h-1zM353 468h1v1h-1zM354 432h1v1h-1zM358 452h1v1h-1zM325 458h1v1h-1zM303 474h1v1h-1zM352 440h1v1h-1zM317 445h1v1h-1zM334 471h1v1h-1zM323 494h1v1h-1zM328 459h1v1h-1zM351 492h1v1h-1zM354 490h1v1h-1zM318 437h1v1h-1zM346 500h1v1h-1zM361 514h1v1h-1zM327 480h1v1h-1zM330 421h1v1h-1zM291 454h1v1h-1zM303 478h1v1h-1zM297 453h1v1h-1zM292 457h1v1h-1zM297 513h1v1h-1zM291 451h1v1h-1zM334 439h1v1h-1zM342 425h1v1h-1zM297 441h1v1h-1zM293 490h1v1h-1zM299 423h1v1h-1zM310 422h1v1h-1zM299 459h1v1h-1zM334 444h1v1h-1zM354 467h1v1h-1zM345 481h1v1h-1zM302 489h1v1h-1zM319 490h1v1h-1zM329 407h1v1h-1zM319 485h1v1h-1zM315 506h1v1h-1zM308 439h1v1h-1zM363 441h1v1h-1zM350 485h1v1h-1zM353 505h1v1h-1zM294 429h1v1h-1zM360 449h1v1h-1zM337 458h1v1h-1zM317 489h1v1h-1zM322 446h1v1h-1zM327 455h1v1h-1zM362 474h1v1h-1zM348 460h1v1h-1zM350 497h1v1h-1zM356 441h1v1h-1zM338 463h1v1h-1zM309 452h1v1h-1zM330 447h1v1h-1zM359 436h1v1h-1zM329 441h1v1h-1zM322 442h1v1h-1zM312 481h1v1h-1zM338 450h1v1h-1zM361 487h1v1h-1zM328 485h1v1h-1zM330 454h1v1h-1zM301 491h1v1h-1zM312 469h1v1h-1zM320 469h1v1h-1zM296 452h1v1h-1zM330 479h1v1h-1zM332 480h1v1h-1zM338 423h1v1h-1zM324 472h1v1h-1zM331 503h1v1h-1zM313 432h1v1h-1zM308 436h1v1h-1zM318 464h1v1h-1zM333 493h1v1h-1zM354 485h1v1h-1zM307 460h1v1h-1zM311 425h1v1h-1zM364 445h1v1h-1zM301 443h1v1h-1zM295 507h1v1h-1zM294 480h1v1h-1zM319 434h1v1h-1zM298 412h1v1h-1zM306 476h1v1h-1zM373 505h1v1h-1zM383 441h1v1h-1zM398 426h1v1h-1zM411 493h1v1h-1zM405 471h1v1h-1zM405 420h1v1h-1zM408 457h1v1h-1zM403 418h1v1h-1zM412 469h1v1h-1zM365 446h1v1h-1zM392 459h1v1h-1zM417 412h1v1h-1zM408 425h1v1h-1zM413 440h1v1h-1zM389 430h1v1h-1zM390 435h1v1h-1zM386 450h1v1h-1zM395 428h1v1h-1zM408 433h1v1h-1zM411 473h1v1h-1zM375 420h1v1h-1zM381 455h1v1h-1zM396 480h1v1h-1zM369 488h1v1h-1zM411 479h1v1h-1zM411 441h1v1h-1zM388 475h1v1h-1zM415 449h1v1h-1zM396 464h1v1h-1zM392 455h1v1h-1zM394 503h1v1h-1zM419 428h1v1h-1zM402 416h1v1h-1zM386 450h1v1h-1zM384 428h1v1h-1zM417 488h1v1h-1zM370 437h1v1h-1zM385 420h1v1h-1zM396 421h1v1h-1zM413 478h1v1h-1zM492 458h1v1h-1zM453 474h1v1h-1zM494 441h1v1h-1zM459 497h1v1h-1zM432 438h1v1h-1zM493 499h1v1h-1zM458 413h1v1h-1zM487 482h1v1h-1zM481 518h1v1h-1zM486 450h1v1h-1zM431 434h1v1h-1zM458 460h1v1h-1zM434 421h1v1h-1zM467 472h1v1h-1zM446 519h1v1h-1zM467 405h1v1h-1zM450 494h1v1h-1zM443 482h1v1h-1zM136 238h1v1h-1zM234 241h1v1h-1zM344 285h1v1h-1zM383 285h1v1h-1zM74 333h1v1h-1zM89 339h1v1h-1zM85 336h1v1h-1zM127 382h1v1h-1zM284 370h1v1h-1zM95 396h1v1h-1zM204 395h1v1h-1zM252 283h1v1h-1z" fill="#e4e45a"/>
<polyline points="53.4,276.0 54.7,264.0 56.4,268.0 57.6,254.0 59.3,214.0 60.5,234.0 61.9,264.0 63.2,251.0 64.4,256.0 65.3,249.0 66.6,285.0 68.3,242.0 70.7,215.0 72.9,232.0 75.4,236.0 77.1,251.0 79.7,229.0 81.4,268.0 83.9,256.0 85.6,270.0 88.1,253.0 89.8,281.0 92.2,310.0 96.6,288.0 98.8,246.0 100.8,251.0 103.9,259.0 106.3,243.0 108.5,264.0 110.7,270.0 112.4,281.0 115.3,248.0 116.9,270.0 119.2,256.0 121.4,289.5 123.7,283.0 126.8,266.0 128.5,255.0 130.2,315.0 132.7,269.0 135.3,253.0 137.8,261.0 141.2,250.0 143.7,274.0 146.3,301.0 150.3,331.0 153.9,311.0 156.4,295.0 158.6,300.0 160.7,289.5 163.2,300.0 165.8,308.0 168.3,265.0 170.5,291.0 172.9,284.0 175.1,289.5 177.3,245.0 179.3,296.0 181.4,310.0 183.6,298.0 187.8,318.0 190.3,284.0 192.5,266.0 194.6,270.0 197.1,247.0 199.3,267.5 201.9,308.6 204.4,305.0 208.6,274.0 211.2,284.0 215.3,342.5 219.7,300.0 223.9,283.0 226.4,301.0 229.8,320.0 232.3,367.0 235.8,318.0 239.2,289.5 241.7,313.0 245.9,288.0 248.5,305.0 249.5,470.0 250.8,305.0 254.4,289.5 257.7,314.0 261.2,300.0 264.0,293.0 266.4,308.0 269.3,299.5 272.2,287.6 274.4,306.0 277.0,336.6 280.0,321.5 282.9,308.0 286.3,287.6 288.5,301.0 290.5,291.0 292.2,318.8 296.4,306.3 299.0,301.2 301.5,289.3 303.7,306.0 306.1,334.0 308.3,301.2 310.5,297.8 312.5,284.2 314.6,302.9 319.0,362.0 322.7,296.1 326.1,311.4 331.2,321.5 332.9,340.8 334.7,328.0 337.6,343.0 341.0,314.0 343.6,321.0 346.9,331.0 351.0,354.0 353.7,333.0 355.4,314.0 357.5,311.0 359.7,299.0 361.4,318.0 363.0,324.0 365.9,355.0 368.1,335.0 370.7,357.0 372.4,336.0 375.4,366.0 377.5,321.0 380.0,345.0 384.0,357.0 387.6,321.0 390.2,340.0 392.4,319.0 395.3,374.0 397.5,319.0 400.3,348.0 402.9,351.0 406.4,341.0 410.2,386.0 412.2,344.0 416.0,375.0 417.0,389.0 420.0,354.0 421.5,365.0 423.4,331.0 425.0,350.0 427.0,380.0 429.7,387.0 432.2,371.0 435.6,370.0 436.5,462.0 439.8,344.0 441.5,375.0 444.0,385.0 446.0,372.0 447.5,391.0 450.5,399.0 452.5,409.5 455.0,406.0 457.3,410.0 459.3,368.0 461.1,389.0 463.4,390.0 465.7,390.0 468.4,413.0 471.0,377.0 472.5,368.0 474.5,398.0 475.6,423.0 477.6,404.0 480.2,401.0 482.2,407.0 484.0,427.0 487.8,416.0 492.4,410.0 495.4,392.6" fill="none" stroke="#44b6f0" stroke-width="1" shape-rendering="crispEdges" stroke-linejoin="miter"/>
<circle cx="249.8" cy="428.2" r="2" fill="none" stroke="#60d0e0" stroke-width="1"/>
</svg>
<div class="t" style="right:703px;top:162px">450</div>
<div class="t" style="left:500px;top:162px">45</div>
<div class="t" style="right:703px;top:204px">400</div>
<div class="t" style="left:500px;top:204px">40</div>
<div class="t" style="right:703px;top:246px">350</div>
<div class="t" style="left:500px;top:246px">35</div>
<div class="t" style="right:703px;top:289px">300</div>
<div class="t" style="left:500px;top:289px">30</div>
<div class="t" style="right:703px;top:331px">250</div>
<div class="t" style="left:500px;top:331px">25</div>
<div class="t" style="right:703px;top:374px">200</div>
<div class="t" style="left:500px;top:374px">20</div>
<div class="t" style="right:703px;top:416px">150</div>
<div class="t" style="left:500px;top:416px">15</div>
<div class="t" style="right:703px;top:458px">100</div>
<div class="t" style="left:500px;top:458px">10</div>
<div class="t" style="right:703px;top:501px">50</div>
<div class="t" style="left:500px;top:501px">5</div>
<div class="t" style="left:3px;width:101px;text-align:center;top:556px">0</div>
<div class="t" style="left:47px;width:101px;text-align:center;top:556px">800</div>
<div class="t" style="left:91px;width:101px;text-align:center;top:556px">1600</div>
<div class="t" style="left:135px;width:101px;text-align:center;top:556px">2400</div>
<div class="t" style="left:179px;width:101px;text-align:center;top:556px">3200</div>
<div class="t" style="left:224px;width:101px;text-align:center;top:556px">4000</div>
<div class="t" style="left:268px;width:101px;text-align:center;top:556px">4800</div>
<div class="t" style="left:312px;width:101px;text-align:center;top:556px">5600</div>
<div class="t" style="left:356px;width:101px;text-align:center;top:556px">6400</div>
<div class="t" style="left:400px;width:101px;text-align:center;top:556px">7200</div>
<div class="t" style="left:445px;width:101px;text-align:center;top:556px">8000gB</div>
<div class="t" style="left:53px;top:155px">MB/s</div>
<div class="t" style="left:481px;top:155px">ms</div>

<!-- right panel -->
<div class="a" style="left:537px;top:148px;width:180px;height:23px;border:1px solid #000;background:#D4D0C8"></div>
<div class="btn" style="left:538px;top:149px;width:178px;height:21px"></div>
<div class="t" style="left:616px;top:153px">Start</div>
<div class="sep" style="left:527px;top:180px;width:195px"></div>

<svg class="a" style="left:535px;top:186px" width="12" height="12"><circle cx="6" cy="6" r="5.5" fill="#fff"/><path d="M10.2 2.2A5.5 5.5 0 1 0 1.8 9.8" fill="none" stroke="#808080"/><path d="M9.2 2.8A4.5 4.5 0 1 0 2.8 9.2" fill="none" stroke="#404040"/><circle cx="6" cy="6" r="2" fill="#000"/></svg>
<svg class="a" style="left:535px;top:202px" width="12" height="12"><circle cx="6" cy="6" r="5.5" fill="#fff"/><path d="M10.2 2.2A5.5 5.5 0 1 0 1.8 9.8" fill="none" stroke="#808080"/><path d="M9.2 2.8A4.5 4.5 0 1 0 2.8 9.2" fill="none" stroke="#404040"/></svg>

<div class="t" style="left:553px;top:186px">Чтение</div>
<div class="t" style="left:553px;top:202px">Запись</div>
<div class="sep" style="left:527px;top:219px;width:195px"></div>
<div class="cb" style="left:534px;top:227px"></div>
<div class="t" style="left:552px;top:228px">Короткий рабочий ход</div>

<div class="a" style="left:534px;top:247px;width:61px;height:19px;background:#D4D0C8;border:1px solid;border-color:#808080 #fff #fff #808080;box-shadow:inset 1px 1px #404040,inset -1px -1px #D4D0C8"></div>
<div class="t" style="left:538px;top:251px;color:#FFFFFF">40</div><div class="t" style="left:537px;top:250px;color:#8C8C8C">40</div>
<div class="btn" style="left:579px;top:249px;width:15px;height:8px"></div>
<div class="btn" style="left:579px;top:257px;width:15px;height:8px"></div>
<svg class="a" style="left:584px;top:251px" width="5" height="3"><path d="M0 3H5L2.5 0z" fill="#A0A0A0"/></svg>
<svg class="a" style="left:584px;top:260px" width="5" height="3"><path d="M0 0H5L2.5 3z" fill="#A0A0A0"/></svg>

<div class="t" style="left:607px;top:251px">ГБ</div>
<div class="cb" style="left:534px;top:276px"></div>
<svg class="a" style="left:536px;top:278px" width="9" height="9"><path d="M1 3.5L3.5 6L8 1.5" fill="none" stroke="#000" stroke-width="2.2"/></svg>
<div class="t" style="left:552px;top:277px;letter-spacing:-0.1px">Скорость передачи данных</div>
<div class="sep" style="left:527px;top:291px;width:195px"></div>
<div class="t" style="left:535px;top:295px">Минимальная скорость</div>
<div class="vbox" style="left:535px;top:310px;width:91px;height:14px;color:#2E9FE8">93.6 MB/s</div>
<div class="t" style="left:535px;top:328px">Максимальная скорость</div>
<div class="vbox" style="left:535px;top:342px;width:91px;height:14px;color:#2E9FE8">396.6 MB/s</div>
<div class="t" style="left:535px;top:358px">Средняя скорость</div>
<div class="vbox" style="left:535px;top:373px;width:91px;height:14px;color:#2E9FE8">271.2 MB/s</div>
<div class="sep" style="left:527px;top:394px;width:195px"></div>
<div class="cb" style="left:535px;top:402px"></div>
<svg class="a" style="left:537px;top:404px" width="9" height="9"><path d="M1 3.5L3.5 6L8 1.5" fill="none" stroke="#000" stroke-width="2.2"/></svg>
<div class="t" style="left:553px;top:402px">Время доступа</div>
<div class="vbox" style="left:535px;top:417px;width:91px;height:14px;color:#E8E830">10.8 ms</div>
<div class="cb" style="left:535px;top:435px"></div>
<svg class="a" style="left:537px;top:437px" width="9" height="9"><path d="M1 3.5L3.5 6L8 1.5" fill="none" stroke="#000" stroke-width="2.2"/></svg>
<div class="t" style="left:553px;top:436px">Пиковая скорость</div>
<div class="vbox" style="left:535px;top:451px;width:91px;height:14px;color:#fff">138.6 MB/s</div>
<div class="t" style="left:535px;top:470px">Загрузка процессора</div>
<div class="vbox" style="left:535px;top:484px;width:91px;height:14px;color:#fff">0.8%</div>
</body></html>
